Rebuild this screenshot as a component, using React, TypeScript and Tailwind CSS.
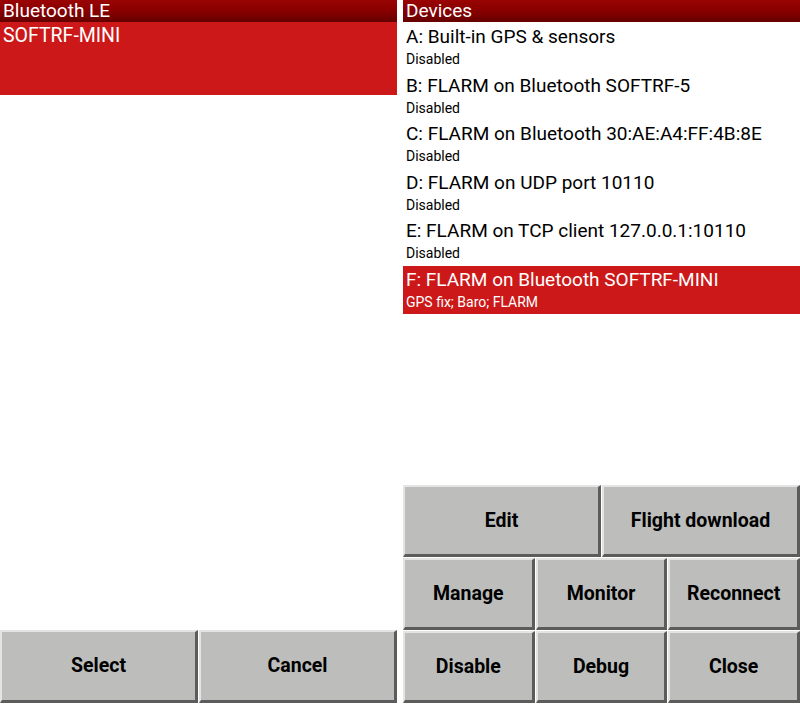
const DEVICES = [
  { title: "A: Built-in GPS & sensors", status: "Disabled" },
  { title: "B: FLARM on Bluetooth SOFTRF-5", status: "Disabled" },
  { title: "C: FLARM on Bluetooth 30:AE:A4:FF:4B:8E", status: "Disabled" },
  { title: "D: FLARM on UDP port 10110", status: "Disabled" },
  { title: "E: FLARM on TCP client 127.0.0.1:10110", status: "Disabled" },
  { title: "F: FLARM on Bluetooth SOFTRF-MINI", status: "GPS fix; Baro; FLARM", selected: true },
];

function Header({ label }: { label: string }) {
  return (
    <div className="h-[22px] bg-gradient-to-b from-[#9a0404] via-[#880000] to-[#650000] px-[3px] text-[19px] leading-[22px] text-white">
      {label}
    </div>
  );
}

function Button({ label }: { label: string }) {
  return (
    <div className="flex items-center justify-center border-t-2 border-l-2 border-r-[3px] border-b-[3px] border-t-[#e4e4e2] border-l-[#e4e4e2] border-r-[#5c5c5c] border-b-[#5c5c5c] bg-[#bdbebc] text-[19.5px] font-bold text-black">
      {label}
    </div>
  );
}

export default function App() {
  return (
    <div
      className="flex h-[705px] w-[800px] bg-white"
      style={{ fontFamily: "Roboto, 'Noto Sans', sans-serif" }}
    >
      <div className="flex w-[397px] flex-col">
        <Header label="Bluetooth LE" />
        <div className="h-[73px] bg-[#cc1818] px-[3px] pt-[3px] text-[19.5px] leading-[22px] text-white">
          SOFTRF-MINI
        </div>
        <div className="flex-1" />
        <div className="mb-[2px] grid h-[73px] grid-cols-2 gap-x-px">
          <Button label="Select" />
          <Button label="Cancel" />
        </div>
      </div>

      <div className="ml-[6px] flex w-[397px] flex-col">
        <Header label="Devices" />
        <div className="mt-[1px]">
          {DEVICES.map((d) => (
            <div
              key={d.title}
              className={`h-[48.5px] px-[3px] ${d.selected ? "bg-[#cc1818] text-white" : "text-black"}`}
            >
              <div className="pt-[1px] text-[19px] leading-[26px]">{d.title}</div>
              <div className="text-[14px] leading-[18px]">{d.status}</div>
            </div>
          ))}
        </div>
        <div className="flex-1" />
        <div className="mb-[2px] grid h-[218px] grid-rows-3 gap-y-px">
          <div className="grid grid-cols-2 gap-x-px">
            <Button label="Edit" />
            <Button label="Flight download" />
          </div>
          <div className="grid grid-cols-3 gap-x-px">
            <Button label="Manage" />
            <Button label="Monitor" />
            <Button label="Reconnect" />
          </div>
          <div className="grid grid-cols-3 gap-x-px">
            <Button label="Disable" />
            <Button label="Debug" />
            <Button label="Close" />
          </div>
        </div>
      </div>
    </div>
  );
}
